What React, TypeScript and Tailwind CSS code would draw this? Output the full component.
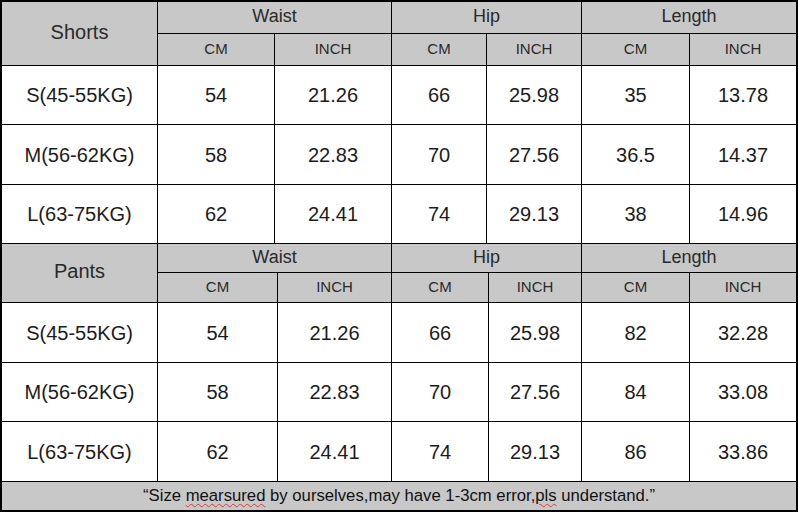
import React from 'react'

type Section = {
  title: string
  cols: string
  rows: string
  data: string[][]
}

const sections: Section[] = [
  {
    title: 'Shorts',
    cols: 'grid-cols-[155px_116px_116px_94px_94px_107px_106px]',
    rows: 'grid-rows-[31px_31px_58px_59px_58px]',
    data: [
      ['S(45-55KG)', '54', '21.26', '66', '25.98', '35', '13.78'],
      ['M(56-62KG)', '58', '22.83', '70', '27.56', '36.5', '14.37'],
      ['L(63-75KG)', '62', '24.41', '74', '29.13', '38', '14.96'],
    ],
  },
  {
    title: 'Pants',
    cols: 'grid-cols-[155px_119px_113px_96px_92px_107px_106px]',
    rows: 'grid-rows-[28px_29px_59px_58px_59px]',
    data: [
      ['S(45-55KG)', '54', '21.26', '66', '25.98', '82', '32.28'],
      ['M(56-62KG)', '58', '22.83', '70', '27.56', '84', '33.08'],
      ['L(63-75KG)', '62', '24.41', '74', '29.13', '86', '33.86'],
    ],
  },
]

const head = 'bg-[#c8c8c8] flex items-center justify-center text-[#2a2a2a]'
const cell = 'bg-white flex items-center justify-center text-[20px] text-[#1c1c1c]'

function SizeTable({ s }: { s: Section }) {
  return (
    <div className={`grid gap-px ${s.cols} ${s.rows}`}>
      <div className={`${head} row-span-2 pb-[4px] text-[20px]`}>{s.title}</div>
      {['Waist', 'Hip', 'Length'].map((h) => (
        <div key={h} className={`${head} col-span-2 pb-[2px] text-[18px]`}>
          {h}
        </div>
      ))}
      {['CM', 'INCH', 'CM', 'INCH', 'CM', 'INCH'].map((u, i) => (
        <div key={i} className={`${head} text-[15px]`}>
          {u}
        </div>
      ))}
      {s.data.map((row) =>
        row.map((v, i) => (
          <div key={row[0] + i} className={cell}>
            {v}
          </div>
        ))
      )}
    </div>
  )
}

export default function App() {
  return (
    <div className="w-[798px] h-[512px] border-2 border-black bg-black flex flex-col gap-px font-['Liberation_Sans',Arial,sans-serif]">
      {sections.map((s) => (
        <SizeTable key={s.title} s={s} />
      ))}
      {/* note row */}
      <div className="h-[28px] bg-[#c8c8c8] flex items-center justify-center text-[16.7px] text-[#111]">
        <p>
          “Size{' '}
          <span className="underline decoration-wavy decoration-[#d23a3a] decoration-1 underline-offset-2">mearsured</span>{' '}
          by ourselves,may have 1-3cm error,
          <span className="underline decoration-wavy decoration-[#d23a3a] decoration-1 underline-offset-2">pls</span>{' '}
          understand.”
        </p>
      </div>
    </div>
  )
}
